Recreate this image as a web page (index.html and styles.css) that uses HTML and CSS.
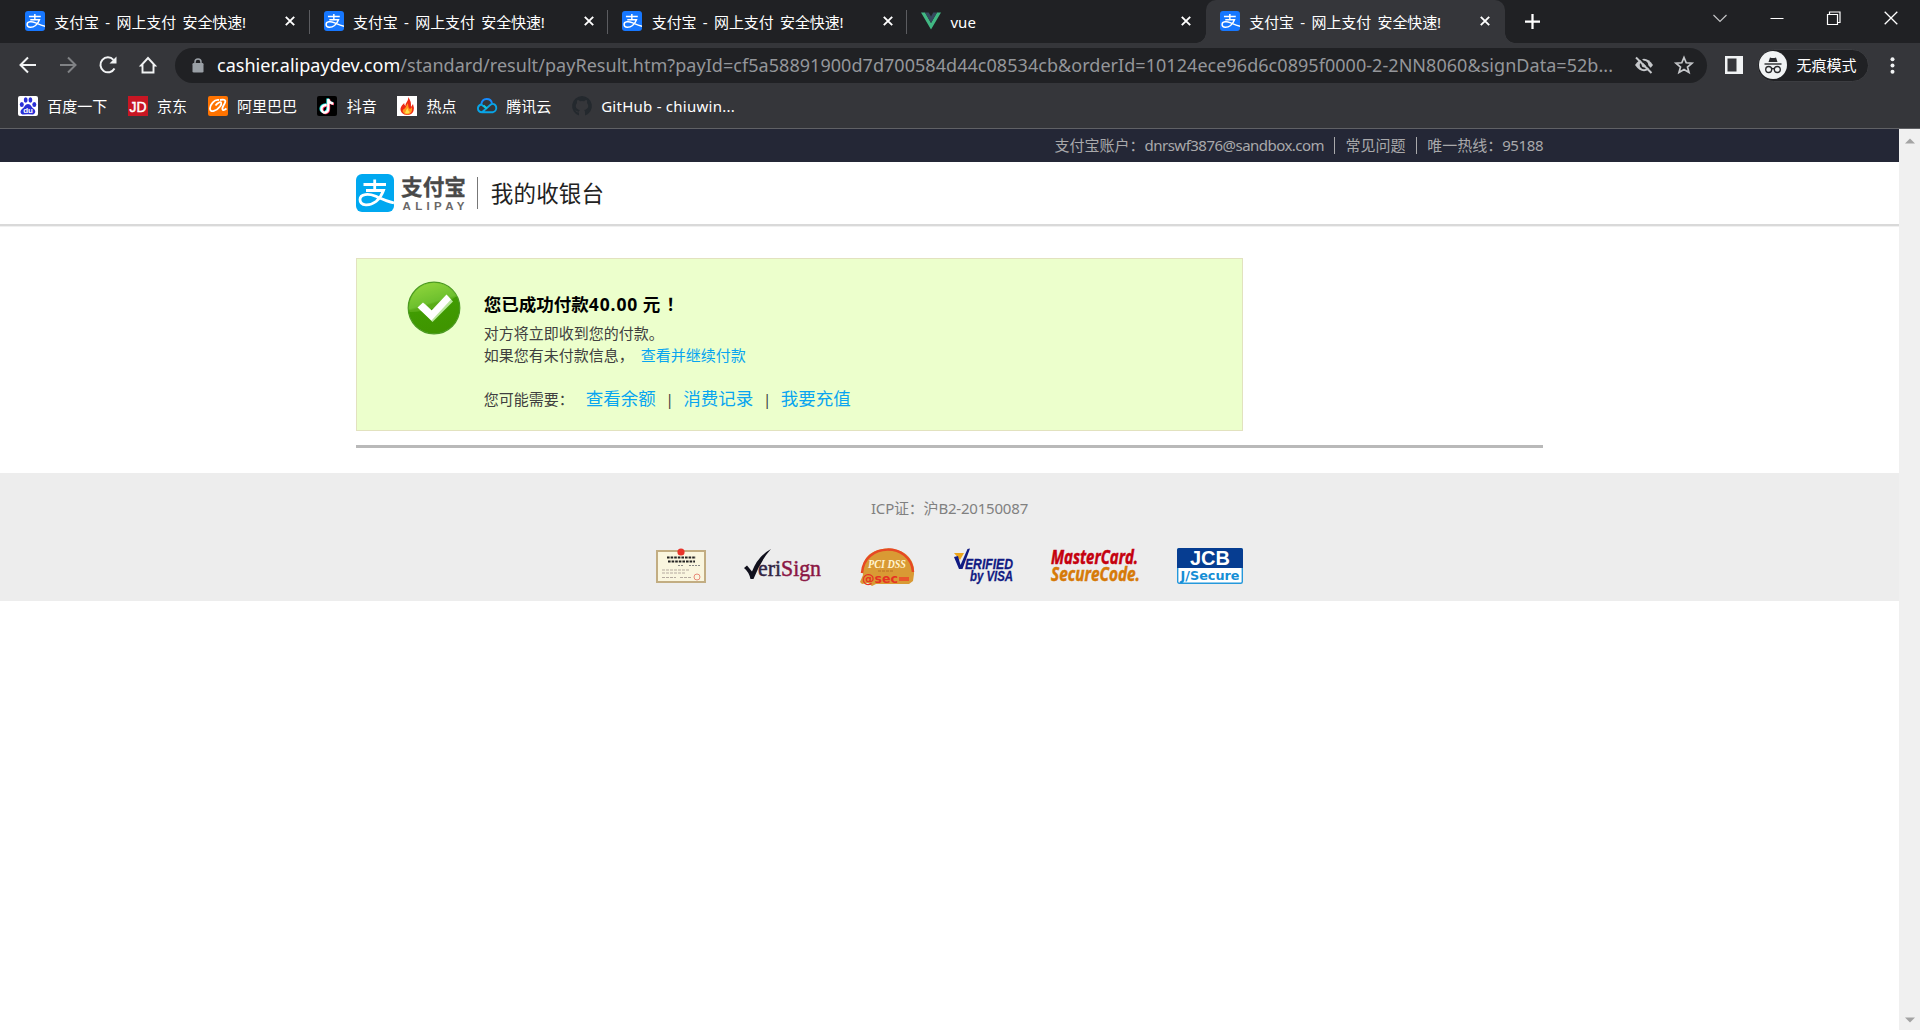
FILE: index.html
```html
<!DOCTYPE html>
<html lang="zh-CN">
<head>
<meta charset="utf-8">
<title>支付宝 - 网上支付 安全快速!</title>
<link rel="stylesheet" href="styles.css">
</head>
<body>
<svg class="defs" width="0" height="0" aria-hidden="true">
  <symbol id="zhi" viewBox="0 0 38 38">
    <path d="M7.500 10.500H30M18.700 5.500V16.500M10 16.500H27.500C25.500 22 23 25 20 27.500C14 32 4 32.500 4 25.500C4 19.500 13 19.500 19 22C25 24.500 30 27 38 29" fill="none" stroke="#fff" stroke-width="2.800"/>
  </symbol>
  <symbol id="x" viewBox="0 0 10 10"><path d="M.8 .8L9.200 9.200M9.200 .8L.8 9.200" fill="none" stroke="currentColor" stroke-width="1.900"/></symbol>
</svg>

<header class="browser">
  <div class="tabs">
    <div class="tab"><svg class="fav ali"><use href="#zhi"/></svg><span class="tab-title">支付宝 - 网上支付 安全快速!</span><svg class="close"><use href="#x"/></svg></div>
    <div class="tab"><svg class="fav ali"><use href="#zhi"/></svg><span class="tab-title">支付宝 - 网上支付 安全快速!</span><svg class="close"><use href="#x"/></svg></div>
    <div class="tab"><svg class="fav ali"><use href="#zhi"/></svg><span class="tab-title">支付宝 - 网上支付 安全快速!</span><svg class="close"><use href="#x"/></svg></div>
    <div class="tab plain"><svg class="fav" viewBox="0 0 20 20"><path d="M0 1.500H4L10 12L16 1.500H20L10 18.500Z" fill="#41b883"/><path d="M4 1.500H7.700L10 5.500L12.300 1.500H16L10 12Z" fill="#35495e"/></svg><span class="tab-title vue">vue</span><svg class="close"><use href="#x"/></svg></div>
    <div class="tab active"><svg class="fav ali"><use href="#zhi"/></svg><span class="tab-title">支付宝 - 网上支付 安全快速!</span><svg class="close"><use href="#x"/></svg></div>
    <svg class="plus" viewBox="0 0 16 16"><path d="M8 0V16M0 8H16" stroke="#fff" stroke-width="2.400"/></svg>
    <div class="window-controls">
      <svg viewBox="0 0 14 14"><path d="M.5 4L7 10.500L13.500 4" fill="none" stroke="#c4c5c7" stroke-width="1.200"/></svg>
      <svg viewBox="0 0 14 14"><path d="M.5 7.500H13.500" stroke="#fff"/></svg>
      <svg viewBox="0 0 14 14"><path d="M.5 3.500H10.500V13.500H.5ZM2.500 3V1H13V11.500H11" fill="none" stroke="#fff" stroke-width="1.200"/></svg>
      <svg viewBox="0 0 14 14"><path d="M.7 .7L13.300 13.300M13.300 .7L.7 13.300" stroke="#fff" stroke-width="1.300"/></svg>
    </div>
  </div>

  <div class="toolbar">
    <svg class="nav" viewBox="0 0 20 20"><path d="M18 10H3M10 2.500L2.500 10L10 17.500" fill="none" stroke="#f1f3f4" stroke-width="2"/></svg>
    <svg class="nav" viewBox="0 0 20 20"><path d="M2 10H17M10 2.500L17.500 10L10 17.500" fill="none" stroke="#808285" stroke-width="2"/></svg>
    <svg class="nav" viewBox="0 0 20 20"><path d="M16.500 13.500A7.500 7.500 0 1 1 15.500 4.800" fill="none" stroke="#f1f3f4" stroke-width="2"/><path d="M18.500 1.500V8.500H11.500Z" fill="#f1f3f4"/></svg>
    <svg class="nav" viewBox="0 0 20 20"><path d="M10 3L17 10.500H15.500V17.500H4.500V10.500H3Z" fill="none" stroke="#f1f3f4" stroke-width="1.900"/></svg>
    <div class="omnibox">
      <svg class="lock" viewBox="0 0 12 15"><rect x="0.500" y="5" width="11" height="9.500" rx="1.300" fill="#9aa0a6"/><path d="M3 5.500V4A3 3 0 0 1 9 4V5.500" fill="none" stroke="#9aa0a6" stroke-width="1.500"/></svg>
      <span class="url"><b class="host">cashier.alipaydev.com</b><span class="path">/standard/result/payResult.htm?payId=cf5a58891900d7d700584d44c08534cb&amp;orderId=10124ece96d6c0895f0000-2-2NN8060&amp;signData=52b...</span></span>
      <svg class="eye" viewBox="0 0 20 20"><path d="M1 10Q10-2.500 19 10Q10 22.500 1 10Z" fill="#c5c7ca"/><circle cx="10" cy="10" r="4.300" fill="#202124"/><circle cx="10" cy="10" r="2.400" fill="#c5c7ca"/><path d="M3.500 1L19 16.500" stroke="#202124" stroke-width="2"/><path d="M2 2.500L17.500 18" stroke="#c5c7ca" stroke-width="2"/></svg>
      <svg class="star" viewBox="0 0 20 20"><path d="M10 2.500L12.200 7.800L18 8.200L13.500 12L15 17.500L10 14.500L5 17.500L6.500 12L2 8.200L7.800 7.800Z" fill="none" stroke="#c5c7ca" stroke-width="1.700"/></svg>
    </div>
    <svg class="panel" viewBox="0 0 18 18"><path d="M0 0H18V18H0ZM2.500 2.500V15.500H11.500V2.500Z" fill="#f1f3f4" fill-rule="evenodd"/></svg>
    <div class="incognito">
      <svg viewBox="0 0 28 28"><circle cx="14" cy="14" r="14" fill="#f1f3f4"/><path d="M9.500 11L11 6.500Q14 7.500 17 6.500L18.500 11Z" fill="#292a2d"/><path d="M5.500 13H22.500" stroke="#292a2d" stroke-width="1.400"/><g fill="none" stroke="#292a2d" stroke-width="1.300"><circle cx="9.700" cy="18.500" r="3"/><circle cx="18.300" cy="18.500" r="3"/><path d="M12.700 18Q14 17 15.300 18"/></g></svg>
      <span>无痕模式</span>
    </div>
    <svg class="menu" viewBox="0 0 5 17"><g fill="#f1f3f4"><circle cx="2.500" cy="2.200" r="2"/><circle cx="2.500" cy="8.500" r="2"/><circle cx="2.500" cy="14.800" r="2"/></g></svg>
  </div>

  <nav class="bookmarks">
    <a><svg viewBox="0 0 20 20"><rect width="20" height="20" rx="2" fill="#fff"/><g fill="#2a2fd6"><ellipse cx="3.800" cy="8.500" rx="2" ry="2.600"/><ellipse cx="7.700" cy="4" rx="1.900" ry="2.700"/><ellipse cx="12.400" cy="4" rx="1.900" ry="2.700"/><ellipse cx="16.300" cy="8.500" rx="2" ry="2.600"/><path d="M10 8C13 8 13 11 16 13C19 16 16 19 14 18.500Q10 17.800 6 18.500C3 19 1 16 4 13C7 11 7 8 10 8Z"/></g><text x="5.200" y="17" class="du">du</text></svg>百度一下</a>
    <a><svg viewBox="0 0 20 20"><rect width="20" height="20" fill="#c81623"/><text x="1.500" y="16" class="jd" textLength="17" lengthAdjust="spacingAndGlyphs">JD</text></svg>京东</a>
    <a><svg viewBox="0 0 20 20"><rect width="20" height="20" rx="2" fill="#ff7300"/><path d="M11 4C6 3 2 9 2 12.500C2 17.500 9 14.500 12 10.500C14.500 7 13 5.500 11 6.500Q9 7.500 7.500 9.500M12 4C19 2.500 18 5.500 15.500 9.500C13 14 15 15.500 18.500 12.500" fill="none" stroke="#fff" stroke-width="1.800"/></svg>阿里巴巴</a>
    <a><svg viewBox="0 0 20 20"><rect width="20" height="20" rx="2" fill="#000"/><g fill="none" stroke-width="2.300"><path d="M9 8.500C1 8.500 3 17 7.500 16C10 15.500 10.500 14 10.500 12V2.500C11 5.500 12.500 6.700 15.500 7" stroke="#25f4ee"/><path d="M10.500 9.500C3 9.500 5 18 9 17C11.500 16.500 12 15 12 13V3.500C12.500 6.500 14 7.700 17 8" stroke="#fe2c55"/><path d="M9.700 9C2 9 4 17.500 8.200 16.500C10.700 16 11.300 14.500 11.300 12.500V3C11.800 6 13.300 7.200 16.300 7.500" stroke="#fff"/></g></svg>抖音</a>
    <a><svg viewBox="0 0 20 20"><rect width="20" height="20" fill="#fff"/><path d="M11 1C12 5 8 6.500 8.500 10Q7 9 7.200 7C4 10 2 13 5 17Q7 19 10 19Q15 19 16.500 15Q17.500 12 16 8L14 11Q14.500 5 11 1Z" fill="#ed2914"/><path d="M5.500 15Q6.500 12 8 12.500Q9.500 9 11 7Q11 12 13 13Q14.500 12 15 11Q16 18 10.500 18.500Q7 18.500 5.500 15Z" fill="#ff961f"/><path d="M8 17Q9 14 10.500 12Q11 15 13 16Q11 18.500 8 17Z" fill="#ffe04c"/></svg>热点</a>
    <a><svg viewBox="0 0 20 20"><g fill="none" stroke-width="1.900"><path d="M4.300 8.500C5 1 14 1.500 15 7.500" stroke="#168bff"/><path d="M9 12L4.300 8.500C-.5 10 0 16 5 16.200L14 8.300C19.500 6 21.500 14.500 16 16.200H5" stroke="#08a5e8"/><path d="M6.500 9.500L10 12.500" stroke="#12c7da"/></g></svg>腾讯云</a>
    <a><svg viewBox="0 0 20 20"><path d="M10 0A10 10 0 0 0 7 19.500V16.500C4.500 17 4.500 15 3 14.500C5 14 5.500 16.500 7 15.500Q7 14.500 8 14C4 13.500 2.500 10 5 7Q4.500 5 5.500 4Q7 4 8 5.200Q10 4.700 12 5.200Q13.500 4 14.700 4Q15.500 5.500 15 7C17.500 10 16 13.500 12.200 14Q13.200 15 13 16.500V19.500A10 10 0 0 0 10 0Z" fill="#24292e"/></svg><span class="gh">GitHub - chiuwin...</span></a>
  </nav>
</header>

<div class="viewport">
  <main class="page">
    <div class="topbar"><div class="container account">
      <span class="acct">支付宝账户：<span class="mail">dnrswf3876@sandbox.com</span></span><span>常见问题</span><span>唯一热线：<span class="hotline">95188</span></span>
    </div></div>
    <div class="masthead"><div class="container brand">
      <svg class="logo-mark"><use href="#zhi"/></svg>
      <svg class="logo-text" viewBox="0 0 65 37"><text x="0" y="20.500" class="lt-cn" textLength="65" lengthAdjust="spacingAndGlyphs">支付宝</text><text x="1.500" y="36" class="lt-en" textLength="62">ALIPAY</text></svg>
      <span class="brand-name">我的收银台</span>
    </div></div>

    <div class="container result-wrap">
      <section class="result">
        <svg class="ok" viewBox="0 0 54 54">
          <defs><linearGradient id="g" x1="0" y1="0" x2="0.300" y2="1"><stop offset="0" stop-color="#8fd634"/><stop offset=".48" stop-color="#59b51d"/><stop offset=".52" stop-color="#409c02"/><stop offset="1" stop-color="#3f9500"/></linearGradient></defs>
          <circle cx="27" cy="27" r="25.800" fill="url(#g)" stroke="#4c9a22" stroke-width="1.200"/>
          <path d="M2.500 31Q28 31 50 15A26 26 0 0 0 27 2A25 25 0 0 0 2.500 31Z" fill="#b5e86a" opacity=".22"/>
          <path d="M12 27.500L17.500 22.500L25.500 30L40.500 14.500L46 20.500L25.500 41Z" fill="#b9e79c"/>
          <path d="M10.500 26.500L16 21.500L24.500 29.500L39.500 13.500L44 18.500L24.500 39.500Z" fill="#fff"/>
        </svg>
        <div class="message">
          <h1>您已成功付款<span class="amount">40.00</span> 元<span class="bang">！</span></h1>
          <p>对方将立即收到您的付款。</p>
          <p>如果您有未付款信息，<a class="more">查看并继续付款</a></p>
          <div class="links">您可能需要：<a>查看余额</a><i>|</i><a>消费记录</a><i>|</i><a>我要充值</a></div>
        </div>
      </section>
    </div>

    <footer class="footer">
      <div class="icp">ICP证：沪B2-20150087</div>
      <div class="badges">
        <svg width="50" height="38" viewBox="0 0 50 38"><rect x="1" y="3" width="48" height="31" fill="#faf6df" stroke="#c2ad82" stroke-width="2"/><circle cx="25" cy="4" r="3.600" fill="#e8342a"/><path d="M11 9.500H40M12 13.500H39" stroke="#222" stroke-width="2.200" stroke-dasharray="2.600 1"/><path d="M22 17.500H28M33 17.500H45" stroke="#888" stroke-dasharray="2 1"/><path d="M6 22H33M6 25H30M6 29.500H20M24 29.500H36" stroke="#b5aaa0" stroke-dasharray="3 1"/><circle cx="41" cy="29" r="3" fill="none" stroke="#e88b78"/></svg>
        <svg class="verisign" width="78" height="38" viewBox="0 0 78 38"><path d="M0 20L3 17.500L8 23.500Q14 8 27 1Q17 12 9.500 31H6.500Q5 24 0 20Z" fill="#10101c"/><text x="14" y="28" class="veri" textLength="63" lengthAdjust="spacingAndGlyphs"><tspan fill="#332644" stroke="#332644">eri</tspan><tspan fill="#8b1744" stroke="#8b1744">Sign</tspan></text></svg>
        <svg width="58" height="38" viewBox="0 0 58 38"><path d="M2 34L5 27C-1 -8 59 -8 56 26L55 33L51 36H18L14 38L10 35L4 36Z" fill="#d99a34"/><path d="M4 25C6-6 53-6 55 24" fill="none" stroke="#e74824" stroke-width="2.500"/><text x="10" y="20" class="pci" textLength="38" lengthAdjust="spacingAndGlyphs">PCI DSS</text><path d="M20 23H36" stroke="#bb6e22" stroke-dasharray="3 1"/><text x="4" y="34.500" class="asec" textLength="36" lengthAdjust="spacingAndGlyphs">@sec</text><rect x="41" y="29" width="10" height="4" fill="#e9562c"/></svg>
        <svg width="61" height="38" viewBox="0 0 61 38"><path d="M1 5H11L7 12Z" fill="#eca51c"/><path d="M1 9L5 8L7.500 17L14.500 1L17 .5L9.500 21H6Z" fill="#111b83"/><text x="12" y="20.500" class="vbv" textLength="48" lengthAdjust="spacingAndGlyphs">ERIFIED</text><text x="17" y="33" class="vbv" textLength="43" lengthAdjust="spacingAndGlyphs">by VISA</text></svg>
        <svg width="89" height="38" viewBox="0 0 89 38"><text x="0" y="15.500" class="mc" fill="#c5000e" stroke="#c5000e" textLength="87" lengthAdjust="spacingAndGlyphs">MasterCard.</text><text x="0" y="33" class="mc" fill="#d67a08" stroke="#d67a08" textLength="89" lengthAdjust="spacingAndGlyphs">SecureCode.</text></svg>
        <svg width="66" height="38" viewBox="0 0 66 38"><rect x=".7" y=".7" width="64.600" height="34.600" rx="1.500" fill="#fff" stroke="#2598db" stroke-width="1.400"/><path d="M0 20V2Q0 0 2 0H64Q66 0 66 2V20Z" fill="#063d91"/><text x="13" y="17" class="jcb" textLength="40" lengthAdjust="spacingAndGlyphs">JCB</text><text x="3.500" y="31.500" class="jsec" textLength="59" lengthAdjust="spacingAndGlyphs">J/Secure</text></svg>
      </div>
    </footer>
  </main>
  <aside class="scrollbar">
    <svg viewBox="0 0 10 6"><path d="M0 5.500L5 .5L10 5.500Z" fill="#a3a3a3"/></svg>
    <svg viewBox="0 0 10 6"><path d="M0 .5L5 5.500L10 .5Z" fill="#a3a3a3"/></svg>
  </aside>
</div>
</body>
</html>
```
FILE: styles.css
```css
* { box-sizing: border-box; }
body {
  margin: 0;
  height: 1030px;
  overflow: hidden;
  display: flex;
  flex-direction: column;
  background: #fff;
  font: 15px/22px "Noto Sans", "Noto Sans CJK SC", sans-serif;
}
svg { display: block; flex: none; overflow: visible; }
.defs { position: absolute; }

/* Browser frame */
.browser { flex: none; height: 129px; background: #35363a; border-bottom: 1px solid #606165; color: #fff; }
.tabs { display: flex; height: 43px; background: #202124; padding-left: 10.750px; }
.tab { position: relative; display: flex; flex: none; width: 298.750px; padding: 11px 14.500px 0 14px; }
.tab::after { content: ""; position: absolute; right: 0; top: 10px; width: 1px; height: 24px; background: #5b5c60; }
.tab.plain::after, .tab.active::after { display: none; }
.tab.active { background: #35363a; border-radius: 10px 10px 0 0; }
.tab.active::before {
  content: ""; position: absolute; left: -10px; right: -10px; bottom: 0; height: 10px;
  background:
    radial-gradient(circle at 0 0, transparent 9.500px, #35363a 10px) left / 10px 10px no-repeat,
    radial-gradient(circle at 100% 0, transparent 9.500px, #35363a 10px) right / 10px 10px no-repeat;
}
.fav { width: 20px; height: 20px; }
.fav.ali { background: #1677ff; border-radius: 3px; overflow: hidden; }
.tab-title { margin-left: 9.500px; white-space: nowrap; letter-spacing: -0.1px; word-spacing: 2.600px; }
.tab-title.vue { letter-spacing: 0; }
.close { width: 10px; height: 10px; margin: 5px 0 0 auto; }
.plus { width: 15px; height: 15px; margin: 14px 0 0 20px; }
.window-controls { display: flex; gap: 43px; margin: 11px 22px 0 auto; }
.window-controls svg { width: 14px; height: 14px; }

.toolbar { display: flex; align-items: center; height: 44px; padding-left: 17.500px; }
.nav { width: 20px; height: 20px; margin-right: 20px; }
.omnibox { display: flex; align-items: center; width: 1532px; height: 35px; margin-left: -2.500px; padding: 0 13.500px 0 16.500px; background: #202124; border-radius: 18px; }
.lock { width: 12px; height: 15px; }
.url { flex: 1; margin-left: 13.500px; font-size: 18px; line-height: 34px; white-space: nowrap; }
.host { font-weight: 400; letter-spacing: 0.020px; }
.path { color: #94969a; letter-spacing: 0.045px; }
.eye { width: 20px; height: 20px; margin-right: 20px; }
.star { width: 20px; height: 20px; }
.panel { width: 18px; height: 18px; margin-left: 18px; }
.incognito { display: flex; align-items: center; width: 112px; height: 33px; margin-left: 14px; padding-left: 1px; gap: 9.500px; border: 1px solid #3c3d41; border-radius: 17px; background: #202124; }
.incognito svg { width: 28px; height: 28px; }
.menu { width: 5px; height: 17px; margin-left: 21px; }

.bookmarks { display: flex; gap: 20.500px; height: 38px; padding: 0 0 0 18px; align-items: center; }
.bookmarks a { display: flex; align-items: center; gap: 9.300px; white-space: nowrap; }
.bookmarks svg { width: 20px; height: 20px; }
.gh { letter-spacing: 0.250px; }
.du { font: bold 8px "Liberation Sans", sans-serif; fill: #fff; }
.jd { font: 15.500px "Liberation Sans", sans-serif; fill: #fff; stroke: #fff; stroke-width: 0.500px; }

/* Page */
.viewport { flex: 1; display: flex; min-height: 0; }
.page { flex: 1; }
.container { width: 1187.500px; margin: 0 auto; }
.topbar { height: 33px; background: #242736; color: #a9a9ab; }
.account { display: flex; justify-content: flex-end; align-items: center; height: 33px; }
.account > span { line-height: 17px; padding-left: 10.500px; margin-left: 10px; border-left: 1px solid #a9a9ab; }
.account > .acct { border: 0; }
.mail { letter-spacing: -0.520px; }
.hotline { letter-spacing: -0.360px; }
.masthead { height: 64px; border-bottom: 2px solid #d9d9d9; box-shadow: 0 1px #f0f0f0; }
.brand { display: flex; padding-top: 12px; }
.logo-mark { width: 38px; height: 38px; background: #00a8f0; border-radius: 6px; overflow: hidden; }
.logo-text { width: 65px; height: 37px; margin-left: 7px; }
.lt-cn { font: 700 22px "Noto Sans CJK SC", sans-serif; fill: #494949; stroke: #494949; stroke-width: 0.300px; }
.lt-en { font: bold 11.500px "Liberation Sans", sans-serif; fill: #6a6868; }
.brand-name { height: 32px; margin: 3px 0 0 11.500px; padding-left: 12.500px; border-left: 1px solid #777; font-size: 22.500px; line-height: 34px; letter-spacing: 0.200px; color: #222; }

.result-wrap { padding-top: 32px; padding-bottom: 14px; border-bottom: 3px solid #b9b9b9; }
.result { display: flex; width: 887.500px; height: 173px; border: 1px solid #e2e2bf; background: #ecffcc; padding: 22px 0 0 50px; }
.ok { width: 54px; height: 54px; }
.message { margin-left: 23px; color: #404040; }
h1 { margin: 10.500px 0 6px; font-size: 17.500px; line-height: 24px; color: #000; }
.amount { letter-spacing: 0.900px; }
.bang { margin-left: 6px; }
p { margin: 0; line-height: 22px; }
a { color: inherit; }
.more, .links a { color: #08a5f0; }
.more { margin-left: 7px; }
.links { display: flex; align-items: baseline; margin-top: 20px; line-height: 25px; }
.links a { font-size: 17.500px; }
.links a:first-of-type { margin-left: 12px; }
.links i { font-style: normal; width: 27.500px; text-align: center; }

.footer { margin-top: 25px; height: 128px; padding-top: 24px; background: #ededed; }
.icp { text-align: center; color: #808080; letter-spacing: -0.200px; }
.badges { display: flex; justify-content: center; margin-top: 29px; gap: 37px; }
.verisign { margin: 0 -1px 0 1px; }
.veri { font: 24px "Liberation Serif", serif; stroke-width: 0.500px; }
.pci { font: italic bold 12px "Liberation Serif", serif; fill: #fff4d0; }
.asec { font: bold 12px "DejaVu Sans", sans-serif; fill: #e63223; }
.vbv { font: italic bold 15px "Liberation Sans", sans-serif; fill: #111b83; stroke: #111b83; stroke-width: 0.300px; }
.mc { font: italic bold 19px "Open Sans", sans-serif; stroke-width: 0.500px; }
.jcb { font: bold 20px "Liberation Sans", sans-serif; fill: #fff; }
.jsec { font: bold 13px "DejaVu Sans", sans-serif; fill: #168ed5; }

.scrollbar { display: flex; flex-direction: column; justify-content: space-between; align-items: center; width: 21px; padding: 9px 0 7px; background: #f0f0f0; }
.scrollbar svg { width: 10px; height: 6px; }
```
